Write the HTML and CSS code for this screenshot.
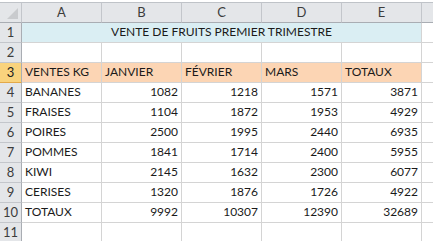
FILE: index.html
```html
<!DOCTYPE html>
<html lang="fr">
<head>
  <meta charset="UTF-8">
  <meta name="viewport" content="width=device-width, initial-scale=1.0">
  <title>Vente de fruits</title>
  <link rel="stylesheet" href="styles.css">
</head>
<body>
  <table class="sheet">
    <colgroup>
      <col class="col-head">
      <col class="col-cell">
      <col class="col-cell">
      <col class="col-cell">
      <col class="col-cell">
      <col class="col-cell">
      <col class="col-rest">
    </colgroup>
    <thead>
      <tr>
        <th class="corner">
          <svg width="11" height="11" viewBox="0 0 11 11"><polygon points="11,0 11,11 0,11" fill="#c9cbce"/></svg>
        </th>
        <th>A</th>
        <th>B</th>
        <th>C</th>
        <th>D</th>
        <th>E</th>
        <th></th>
      </tr>
    </thead>
    <tbody>
      <tr>
        <th>1</th>
        <td class="title" colspan="5">VENTE DE FRUITS PREMIER TRIMESTRE</td>
        <td></td>
      </tr>
      <tr>
        <th>2</th>
        <td></td><td></td><td></td><td></td><td></td><td></td>
      </tr>
      <tr class="labels">
        <th class="active">3</th>
        <td>VENTES KG</td>
        <td>JANVIER</td>
        <td>FÉVRIER</td>
        <td>MARS</td>
        <td>TOTAUX</td>
        <td class="blank"></td>
      </tr>
      <tr>
        <th>4</th>
        <td>BANANES</td>
        <td class="num">1082</td>
        <td class="num">1218</td>
        <td class="num">1571</td>
        <td class="num">3871</td>
        <td></td>
      </tr>
      <tr>
        <th>5</th>
        <td>FRAISES</td>
        <td class="num">1104</td>
        <td class="num">1872</td>
        <td class="num">1953</td>
        <td class="num">4929</td>
        <td></td>
      </tr>
      <tr>
        <th>6</th>
        <td>POIRES</td>
        <td class="num">2500</td>
        <td class="num">1995</td>
        <td class="num">2440</td>
        <td class="num">6935</td>
        <td></td>
      </tr>
      <tr>
        <th>7</th>
        <td>POMMES</td>
        <td class="num">1841</td>
        <td class="num">1714</td>
        <td class="num">2400</td>
        <td class="num">5955</td>
        <td></td>
      </tr>
      <tr>
        <th>8</th>
        <td>KIWI</td>
        <td class="num">2145</td>
        <td class="num">1632</td>
        <td class="num">2300</td>
        <td class="num">6077</td>
        <td></td>
      </tr>
      <tr>
        <th>9</th>
        <td>CERISES</td>
        <td class="num">1320</td>
        <td class="num">1876</td>
        <td class="num">1726</td>
        <td class="num">4922</td>
        <td></td>
      </tr>
      <tr>
        <th>10</th>
        <td>TOTAUX</td>
        <td class="num">9992</td>
        <td class="num">10307</td>
        <td class="num">12390</td>
        <td class="num">32689</td>
        <td></td>
      </tr>
      <tr>
        <th>11</th>
        <td></td><td></td><td></td><td></td><td></td><td></td>
      </tr>
    </tbody>
  </table>
</body>
</html>
```

FILE: styles.css
```css
html, body {
  margin: 0;
  padding: 0;
  overflow: hidden;
}
body {
  background-color: #fff;
  font-family: Lato, "Liberation Sans", sans-serif;
  font-size: 12px;
  color: #1a1a1a;
}
.sheet {
  margin-top: 2px;
  border-collapse: separate;
  border-spacing: 0;
  table-layout: fixed;
  width: 443px;
}
.col-head {
  width: 22px;
}
.col-cell {
  width: 80px;
}
.col-rest {
  width: 21px;
}
.sheet th,
.sheet td {
  box-sizing: border-box;
  height: 20px;
  padding: 0 3px 2px;
  border-right: 1px solid #d4d4d4;
  border-bottom: 1px solid #d4d4d4;
  line-height: 16px;
  vertical-align: bottom;
  white-space: nowrap;
  overflow: hidden;
}
.sheet th {
  background-color: #e4e6e9;
  color: #3c3c3c;
  font-size: 13px;
  font-weight: normal;
  text-align: center;
  padding: 0 0 2px;
}
.sheet thead th {
  height: 21px;
  border-top: 1px solid #bfc3c8;
  border-right-color: #c3c6cb;
  border-bottom-color: #a9adb3;
}
.sheet tbody th {
  border-right-color: #a9adb3;
  border-bottom-color: #c3c6cb;
}
.sheet .corner {
  padding: 0 3px 3px 0;
  text-align: right;
  line-height: 0;
}
.sheet tbody th.active {
  background-color: #f9d37d;
  border-bottom-color: #e3a94a;
  color: #222;
}
.title {
  background-color: #daeef3;
  text-align: center;
}
.labels td {
  background-color: #fcd5b4;
}
.labels td.blank {
  background-color: #fff;
}
.num {
  text-align: right;
}
```
